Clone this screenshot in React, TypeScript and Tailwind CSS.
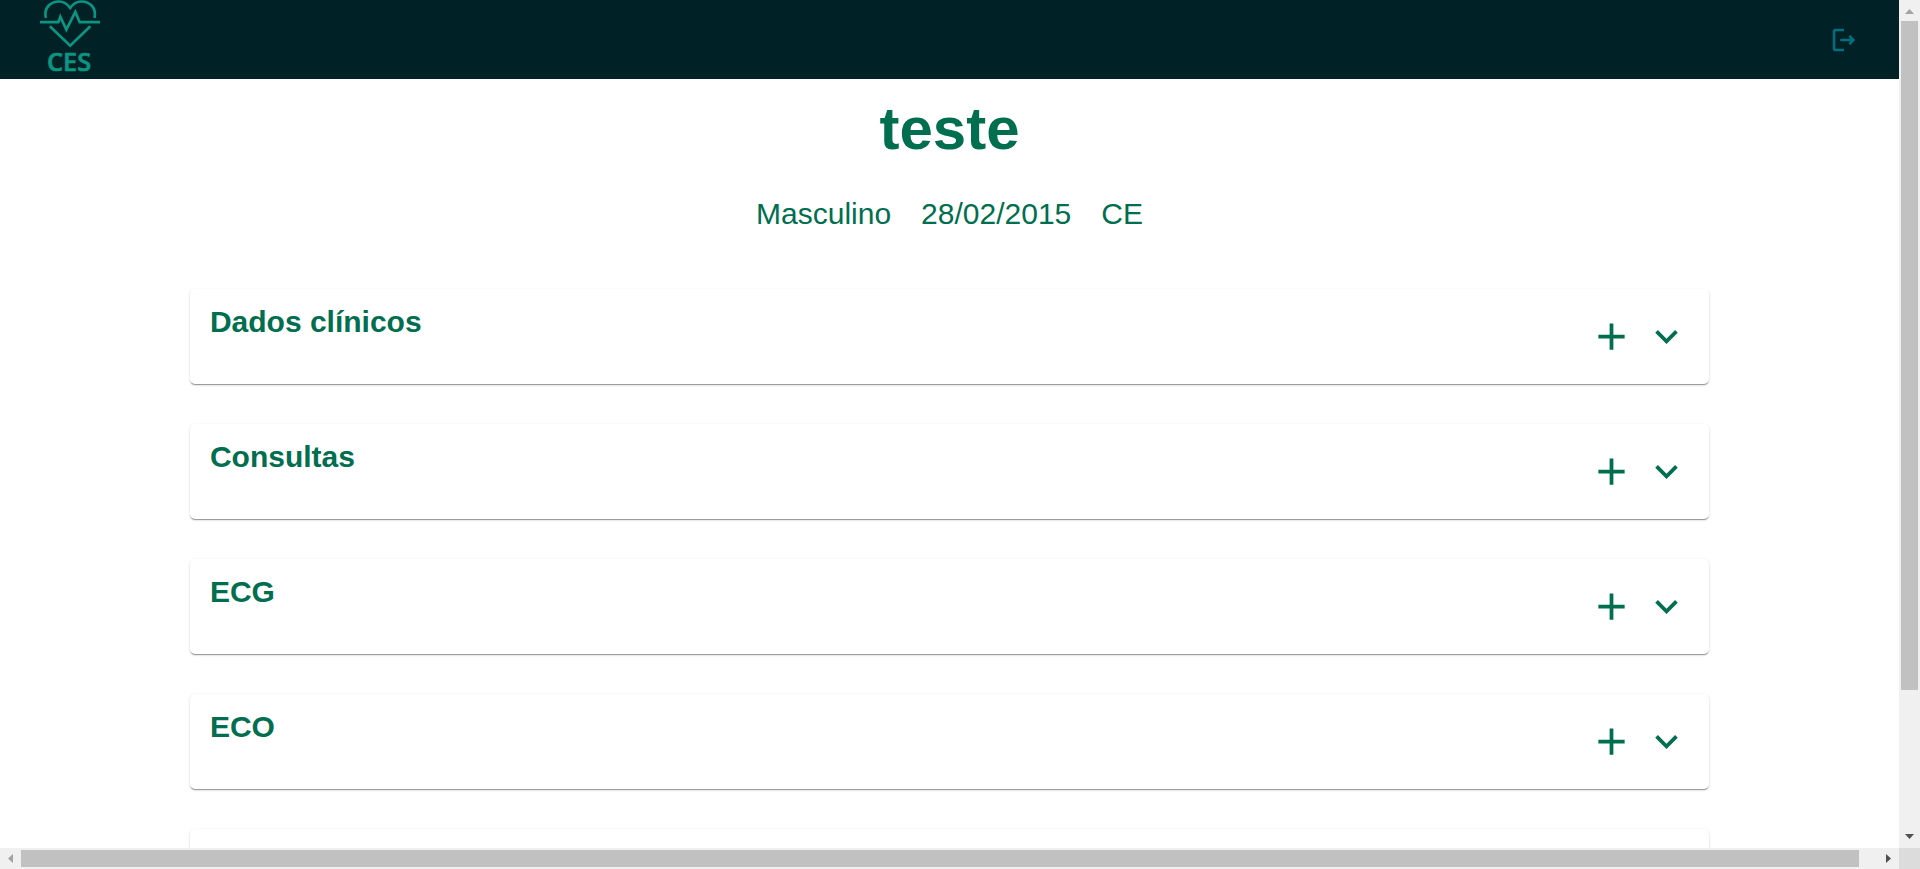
import { MdAdd, MdExpandMore } from "react-icons/md";

const sections = ["Dados clínicos", "Consultas", "ECG", "ECO", ""];

function Logo() {
  return (
    <svg viewBox="0 0 180 237" className="h-[79px] w-[60px]" role="img" aria-label="CES">
      <g fill="none" stroke="#0b9583" strokeWidth="8">
        <path d="M17.500 54 C11 22 32 4.500 57 4.500 C72 4.500 82 12 90.500 24 C99 12 109 4.500 124 4.500 C149 4.500 170 22 163.500 54" />
        <path d="M0 66.500 H55 L61 50 L79 89 L106 36 L119 66.500 H180" />
        <path d="M29.500 79 L90.500 137 L151 79" />
      </g>
      <text
        x="87"
        y="212"
        textAnchor="middle"
        fontFamily="'Open Sans', sans-serif"
        fontWeight="600"
        fontSize="76"
        fill="#0b9583"
        stroke="#0b9583"
        strokeWidth="2"
      >
        CES
      </text>
    </svg>
  );
}

function LogoutIcon() {
  return (
    <svg viewBox="0 0 24 24" className="size-[30px]" fill="currentColor" aria-hidden="true">
      <path d="M17 8l-1.410 1.410L17.170 11H9v2h8.170l-1.580 1.580L17 16l4-4-4-4zM5 5h7V3H5c-1.100 0-2 .9-2 2v14c0 1.100.9 2 2 2h7v-2H5V5z" />
    </svg>
  );
}

function SectionCard({ title }: { title: string }) {
  return (
    <section className="flex h-[95px] shrink-0 items-center justify-between rounded-[5px] bg-white px-5 shadow-[0_2px_1px_-1px_rgba(0,0,0,0.24),0_1px_1px_0_rgba(0,0,0,0.15),0_1px_3px_0_rgba(0,0,0,0.14)]">
      {title ? <h2 className="self-start pt-4 text-3xl leading-[34px] font-bold">{title}</h2> : <span />}
      <div className="flex gap-[10px]">
        <button type="button" aria-label="Adicionar">
          <MdAdd size={45} />
        </button>
        <button type="button" aria-label="Expandir">
          <MdExpandMore size={45} />
        </button>
      </div>
    </section>
  );
}

function Arrow({ d, className }: { d: string; className: string }) {
  return (
    <svg viewBox="0 0 21 21" className={`size-[21px] shrink-0 ${className}`} fill="currentColor" aria-hidden="true">
      <path d={d} />
    </svg>
  );
}

export default function App() {
  return (
    <div className="grid h-screen grid-cols-[minmax(0,1fr)_21px] grid-rows-[minmax(0,1fr)_21px] bg-white font-['Liberation_Sans',Arial,sans-serif] text-[#006e4f]">
      <div className="flex flex-col overflow-hidden">
        <header className="flex h-[79px] shrink-0 items-center justify-between bg-[#002125] px-10">
          <a href="#inicio">
            <Logo />
          </a>
          <button type="button" aria-label="Sair" className="text-[#007080]">
            <LogoutIcon />
          </button>
        </header>
        <main className="flex flex-col">
          <h1 className="pt-4 text-center text-6xl leading-[68px] font-bold">teste</h1>
          <div className="flex justify-center gap-[30px] pt-[34px] text-3xl leading-[34px]">
            <p>Masculino</p>
            <p>28/02/2015</p>
            <p>CE</p>
          </div>
          <div className="mx-[10%] flex flex-col gap-10 pt-[58px]">
            {sections.map((title, index) => (
              <SectionCard key={index} title={title} />
            ))}
          </div>
        </main>
      </div>
      <div className="flex flex-col items-center bg-[#f0f0f0]" aria-hidden="true">
        <Arrow d="M6 14 L10.500 9 L15 14 Z" className="text-[#a3a3a3]" />
        <div className="flex w-[17px] flex-1 flex-col">
          <div className="h-[83%] bg-[#c1c1c1]" />
        </div>
        <Arrow d="M6 7 L10.500 12 L15 7 Z" className="text-[#505050]" />
      </div>
      <div className="flex items-center bg-[#f0f0f0]" aria-hidden="true">
        <Arrow d="M13 6 L8 10.500 L13 15 Z" className="text-[#a3a3a3]" />
        <div className="flex h-[17px] flex-1">
          <div className="w-[99%] bg-[#c1c1c1]" />
        </div>
        <Arrow d="M8 6 L13 10.500 L8 15 Z" className="text-[#505050]" />
      </div>
      <div className="bg-[#dcdcdc]" />
    </div>
  );
}
